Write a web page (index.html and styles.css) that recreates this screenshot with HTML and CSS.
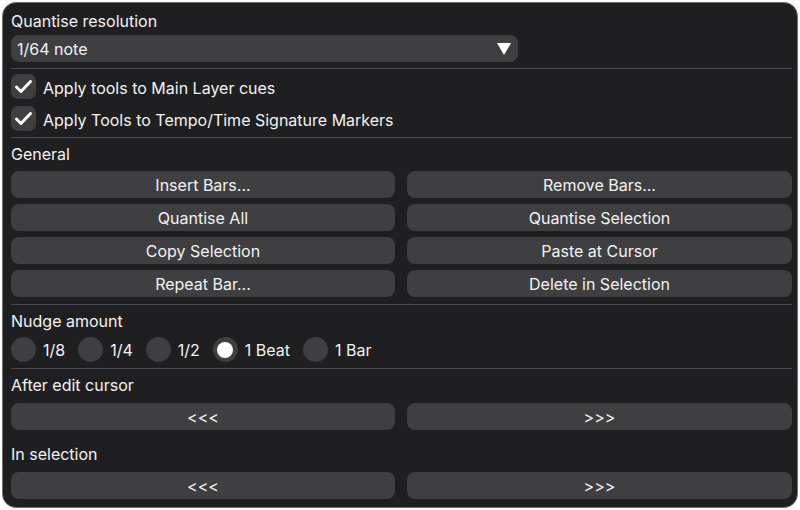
FILE: index.html
```html
<!DOCTYPE html>
<html>
<head>
<meta charset="utf-8">
<link rel="stylesheet" href="styles.css">
</head>
<body>
<div class="panel">
  <div class="label">Quantise resolution</div>
  <div class="select">
    <span>1/64 note</span>
    <svg class="arrow" width="14" height="12" viewBox="0 0 14 12"><polygon points="0,0 14,0 7,12" fill="#fff"/></svg>
  </div>
  <div class="sep sep-a"></div>
  <div class="checks">
    <div class="check-row">
      <div class="box"><svg width="25" height="25" viewBox="0 0 25 25"><polyline points="5.5,13 10,17.5 19.5,7.5" fill="none" stroke="#fff" stroke-width="3" stroke-linecap="round" stroke-linejoin="round"/></svg></div>
      <span>Apply tools to Main Layer cues</span>
    </div>
    <div class="check-row">
      <div class="box"><svg width="25" height="25" viewBox="0 0 25 25"><polyline points="5.5,13 10,17.5 19.5,7.5" fill="none" stroke="#fff" stroke-width="3" stroke-linecap="round" stroke-linejoin="round"/></svg></div>
      <span>Apply Tools to Tempo/Time Signature Markers</span>
    </div>
  </div>
  <div class="sep sep-b"></div>
  <div class="label">General</div>
  <div class="grid general">
    <div class="btn">Insert Bars...</div>
    <div class="btn">Remove Bars...</div>
    <div class="btn">Quantise All</div>
    <div class="btn">Quantise Selection</div>
    <div class="btn">Copy Selection</div>
    <div class="btn">Paste at Cursor</div>
    <div class="btn">Repeat Bar...</div>
    <div class="btn">Delete in Selection</div>
  </div>
  <div class="sep sep-c"></div>
  <div class="label">Nudge amount</div>
  <div class="radios">
    <div class="radio"><div class="dot"></div><span>1/8</span></div>
    <div class="radio"><div class="dot"></div><span>1/4</span></div>
    <div class="radio"><div class="dot"></div><span>1/2</span></div>
    <div class="radio"><div class="dot on"></div><span>1 Beat</span></div>
    <div class="radio"><div class="dot"></div><span>1 Bar</span></div>
  </div>
  <div class="sep sep-d"></div>
  <div class="label">After edit cursor</div>
  <div class="grid pair">
    <div class="btn">&lt;&lt;&lt;</div>
    <div class="btn">&gt;&gt;&gt;</div>
  </div>
  <div class="label label-gap">In selection</div>
  <div class="grid pair">
    <div class="btn">&lt;&lt;&lt;</div>
    <div class="btn">&gt;&gt;&gt;</div>
  </div>
</div>
</body>
</html>
```

FILE: styles.css
```css
html, body {
  margin: 0;
  padding: 0;
  background: #ffffff;
}
body {
  width: 800px;
  height: 510px;
  font-family: Inter, "Noto Sans", sans-serif;
  font-size: 16px;
  color: #f2f2f2;
}
.panel {
  box-sizing: border-box;
  margin: 2px;
  width: 796px;
  height: 506px;
  border: 1px solid #6e6e70;
  border-radius: 14px;
  background: #1f1f21;
  padding: 8px 5px 0 8px;
  display: flex;
  flex-direction: column;
}
.label {
  height: 20px;
  line-height: 20px;
}
.select {
  margin-top: 4px;
  height: 27px;
  width: 507px;
  box-sizing: border-box;
  background: #3f3f41;
  border-radius: 8px;
  display: flex;
  align-items: center;
  justify-content: space-between;
  padding: 1px 7px 0 6px;
}
.arrow { display: block; margin-top: -1px; }
.sep {
  height: 1px;
  background: #4a4952;
}
.sep-a { margin: 6px 0 5px; }
.sep-b { margin: 6px 0 6px; }
.sep-c { margin: 7px 0 6px; }
.sep-d { margin: 6px 0 6px; }
.checks {
  display: flex;
  flex-direction: column;
  gap: 7px;
}
.check-row {
  display: flex;
  align-items: center;
  gap: 7px;
  height: 25px;
}
.check-row span { padding-top: 2px; }
.box {
  width: 25px;
  height: 25px;
  border-radius: 7px;
  background: #3f3f41;
}
.box svg { display: block; }
.grid {
  display: grid;
  grid-template-columns: 384px 1fr;
  column-gap: 12px;
}
.general {
  margin-top: 7px;
  row-gap: 6px;
}
.pair {
  margin-top: 8px;
}
.label-gap { margin-top: 14px; }
.btn {
  height: 27px;
  line-height: 28px;
  background: #3f3f41;
  border-radius: 8px;
  text-align: center;
}
.radios {
  margin-top: 6px;
  display: flex;
  align-items: center;
  gap: 13px;
  height: 25px;
}
.radio {
  display: flex;
  align-items: center;
  gap: 7px;
}
.radio span { padding-top: 1px; }
.dot {
  width: 25px;
  height: 25px;
  border-radius: 50%;
  background: #3f3f41;
  position: relative;
}
.dot.on::after {
  content: "";
  position: absolute;
  left: 4.5px;
  top: 4.5px;
  width: 16px;
  height: 16px;
  border-radius: 50%;
  background: #ffffff;
}
```
